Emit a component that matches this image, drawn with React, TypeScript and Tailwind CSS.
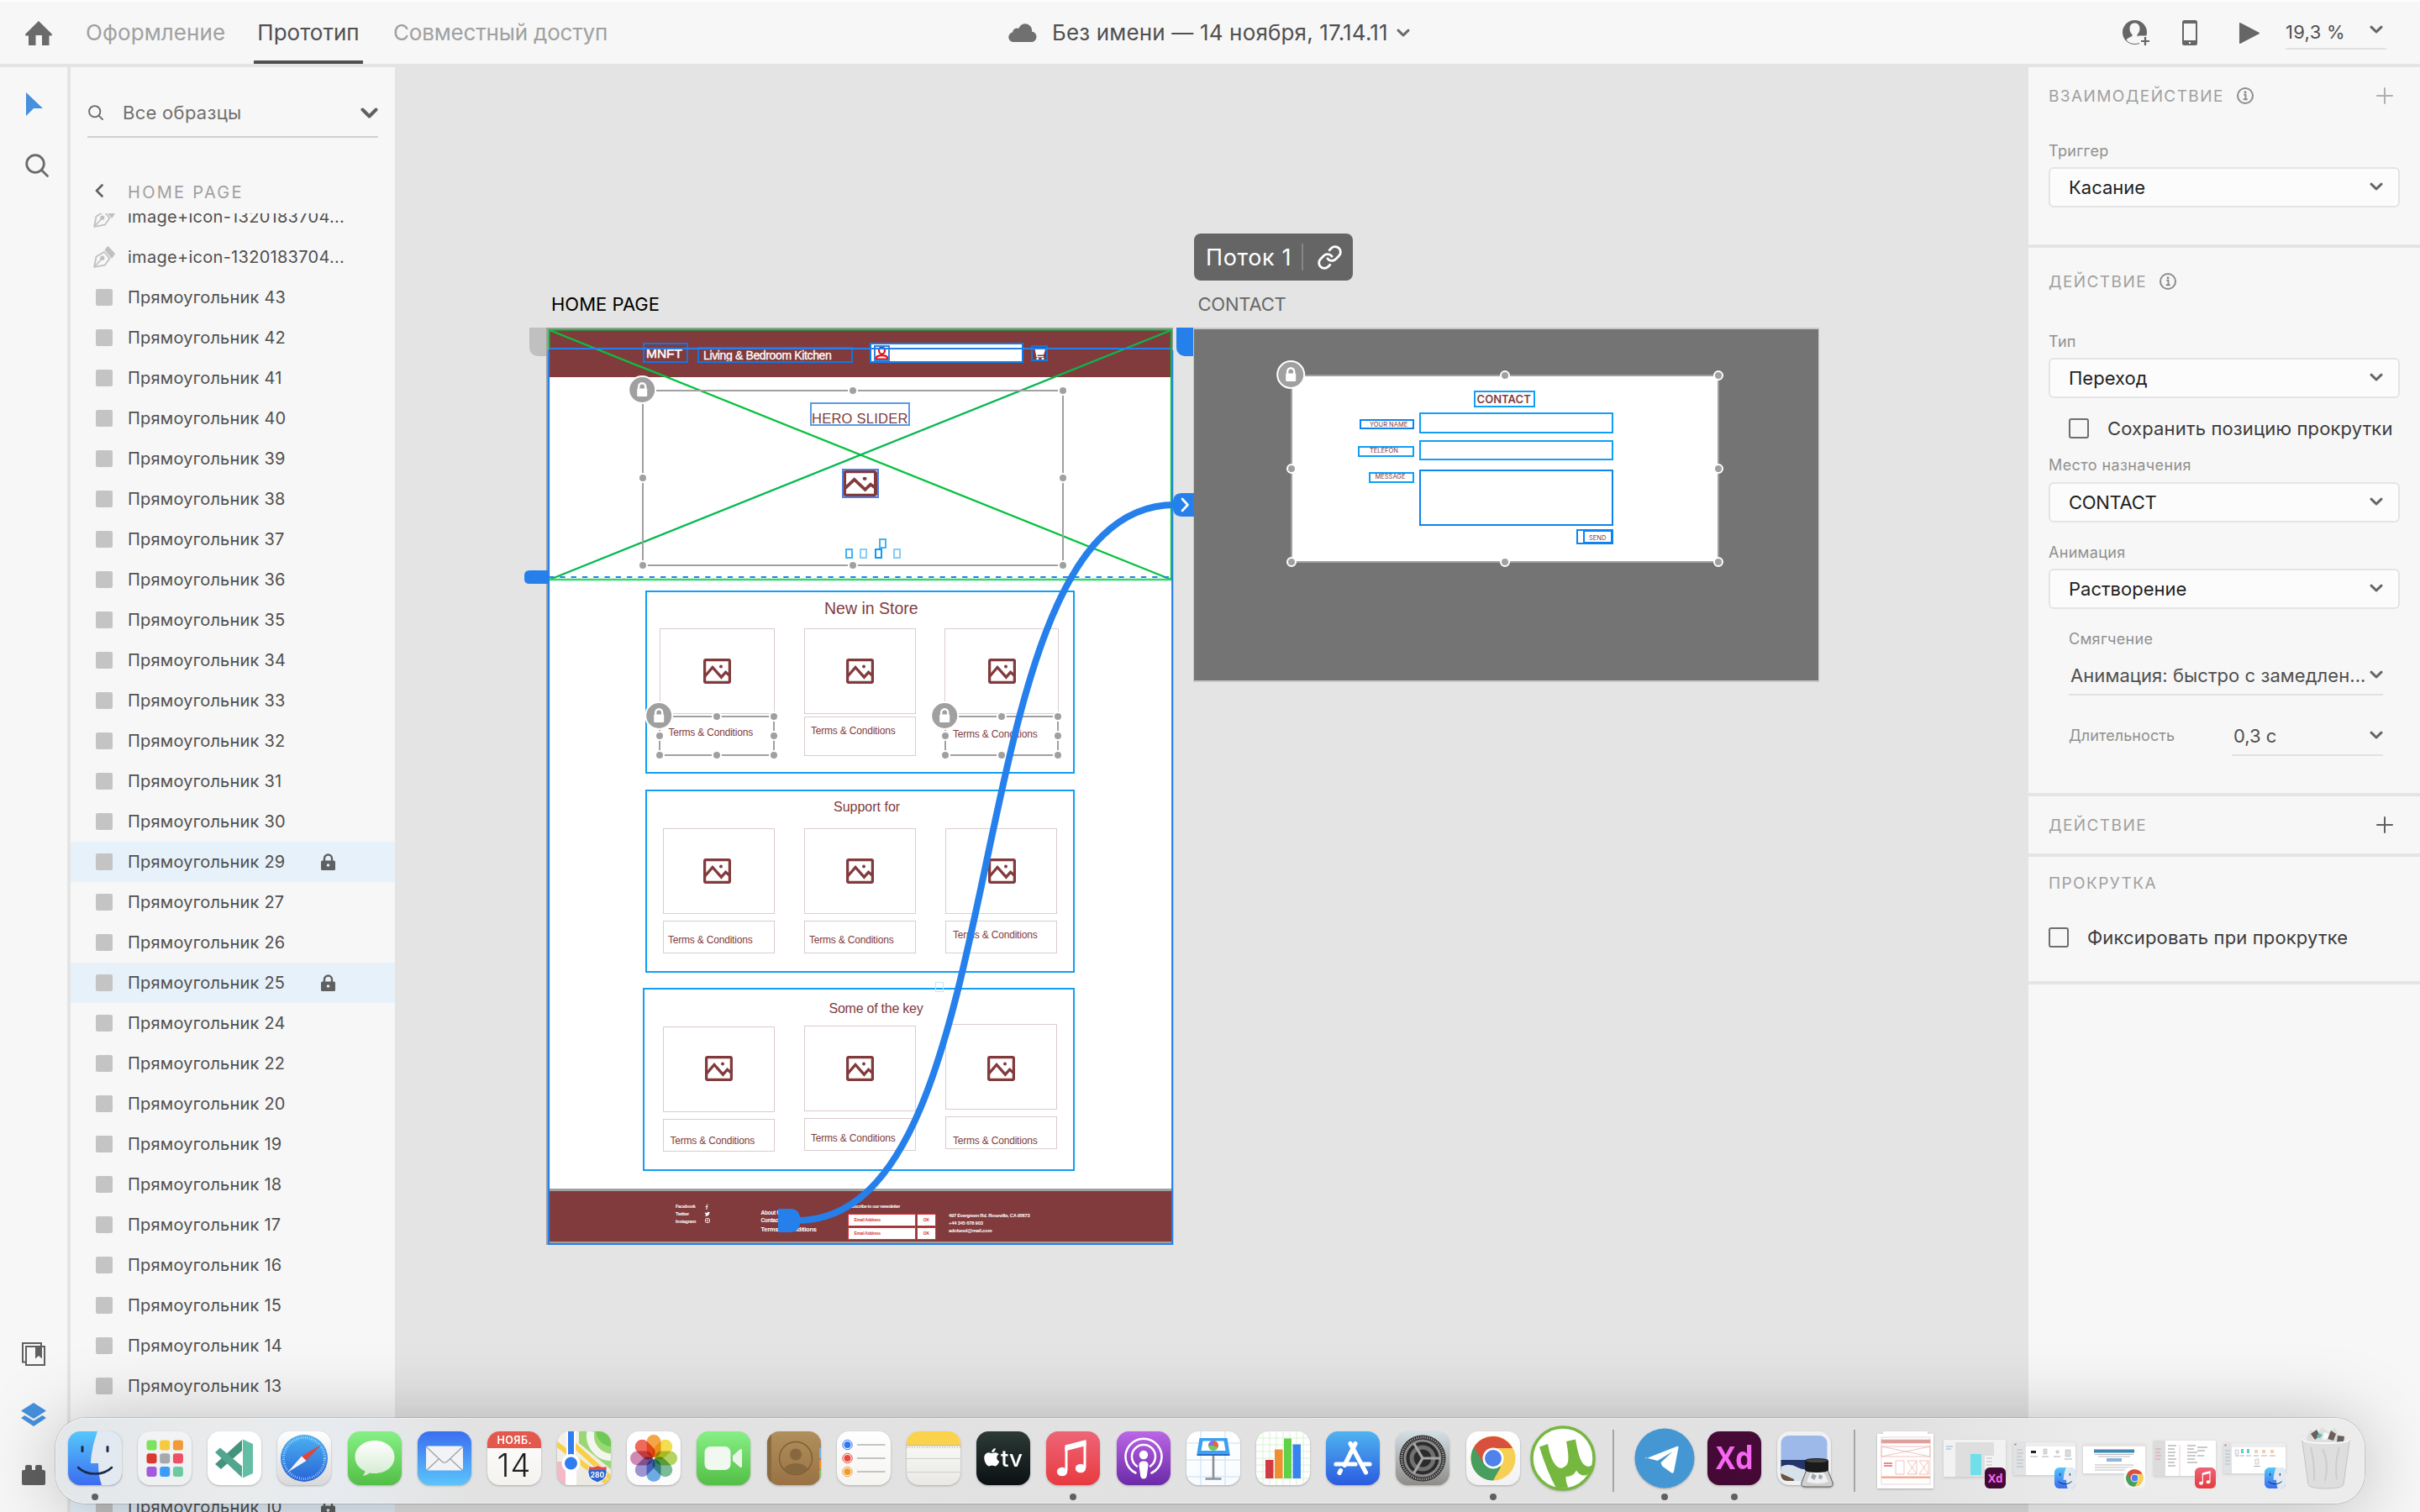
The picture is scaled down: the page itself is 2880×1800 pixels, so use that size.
import React from "react";
import clsx from "clsx";
import { FaApple } from "react-icons/fa";
import { Link } from "lucide-react";

type Box = { children?: React.ReactNode; className?: string };

/* ---------- small shared icons ---------- */

function Chevron({ className }: { className?: string }) {
  return (
    <svg viewBox="0 0 16 10" className={clsx("shrink-0", className)} fill="none" stroke="currentColor" strokeWidth="3" strokeLinecap="round" strokeLinejoin="round">
      <path d="M2 2.200 8 8l6-5.800" />
    </svg>
  );
}

function Info() {
  return (
    <svg viewBox="0 0 20 20" className="size-5 text-[#8c8c8c]" fill="none" stroke="currentColor">
      <circle cx="10" cy="10" r="9" strokeWidth="2" />
      <path d="M8.300 8.700h2.200v5.300M7.700 14.200h5" strokeWidth="1.900" />
      <circle cx="10" cy="5.800" r="1.500" fill="currentColor" stroke="none" />
    </svg>
  );
}

function Plus({ className }: { className: string }) {
  return (
    <svg viewBox="0 0 20 20" className={clsx("size-5", className)} stroke="currentColor" strokeWidth="2" strokeLinecap="round">
      <path d="M10 1v18M1 10h18" />
    </svg>
  );
}

function SearchIcon({ className, w }: { className: string; w: number }) {
  return (
    <svg viewBox="0 0 28 28" className={className} fill="none" stroke="currentColor" strokeWidth={w} strokeLinecap="round">
      <circle cx="12" cy="12" r="10.300" />
      <path d="m19.500 19.500 7 7" />
    </svg>
  );
}

/* ---------- top bar ---------- */

function TopBar() {
  return (
    <header className="flex h-[76px] shrink-0 items-center border-t-2 border-[#fdfdfd] bg-[#f7f7f7] text-[26px] leading-none">
      <div className="flex h-full w-[1200px] items-center pl-[30px]">
        <svg viewBox="0 0 32 29" className="h-[29px] w-8" fill="#6a6a6a">
          <path d="M16 0 31.700 15.500q.8 2-1.200 2H28.500V29H20V17h-7.500v12H4V17.500H1.500q-2 0-1.200-2Z" />
        </svg>
        <div className="ml-10 w-[200px] tracking-[0.09px] text-[#a0a0a0]">Оформление</div>
        <div className="relative flex h-full w-[130px] items-center justify-center text-[#505050]">
          Прототип
          <div className="absolute inset-x-0 bottom-0 h-1 bg-[#505050]" />
        </div>
        <div className="ml-9 tracking-[-0.18px] text-[#a0a0a0]">Совместный доступ</div>
      </div>
      <div className="flex h-full w-[1326px] items-center text-[#505050]">
        <svg viewBox="0 0 34 22" className="h-[22px] w-[34px]" fill="#707070">
          <path d="M6 22a5.800 5.800 0 0 1-1-11.500 5.500 5.500 0 0 1 7.500-4.700A8 8 0 0 1 28 9.500a6.300 6.300 0 0 1 0 12.500Z" />
        </svg>
        <div className="ml-[18px] tracking-[0.16px]">Без имени — 14 ноября, 17.14.11</div>
        <Chevron className="ml-[10px] h-[10px] w-4 text-[#6a6a6a]" />
      </div>
      <div className="flex h-full flex-1 items-center text-[#666666]">
        <svg viewBox="0 0 32 30" className="h-[30px] w-8" fill="none">
          <circle cx="14.500" cy="14.500" r="14.500" fill="#666" />
          <path d="M14.500 3.500c3.800 0 6 2.600 6 6.400 0 3.300-1.200 5.600-3 7v2.200c3 1.300 5.500 2.600 7 4.300-2.400 3-6 4.600-10 4.600s-7.600-1.600-10-4.600c1.500-1.700 4-3 7-4.300v-2.200c-1.800-1.400-3-3.700-3-7 0-3.800 2.200-6.400 6-6.400Z" fill="#f7f7f7" />
          <path d="M18.500 18.500H32V30H20.500Z" fill="#f7f7f7" />
          <path d="M27 20v10M22 25h10" stroke="#666" strokeWidth="2.200" />
        </svg>
        <svg viewBox="0 0 18 30" className="ml-[39px] h-[30px] w-[18px]">
          <rect width="18" height="30" rx="2.500" fill="#666" />
          <rect x="2" y="4" width="14" height="20" fill="#f7f7f7" />
          <rect x="8" y="26" width="2" height="2" fill="#f7f7f7" />
        </svg>
        <svg viewBox="0 0 24 25" className="ml-[50px] h-[25px] w-6" fill="#666">
          <path d="M0 1q0-1.500 1.500-.8l22 11.500q1 .8 0 1.600l-22 11.500Q0 25.500 0 24Z" />
        </svg>
        <div className="ml-[31px] flex h-[39px] w-[120px] items-center justify-between border-b-2 border-[#e2e2e2] pr-1 text-[22px] text-[#505050]">
          <span className="tracking-[0.29px]">19,3 %</span>
          <Chevron className="mb-1.5 h-[10px] w-4 text-[#666]" />
        </div>
      </div>
    </header>
  );
}

/* ---------- left side ---------- */

function ToolRail() {
  return (
    <nav className="flex w-[84px] shrink-0 flex-col border-t-4 border-r-4 border-t-[#e4e4e4] border-r-[#e4e4e4] bg-[#f7f7f7] pt-[30px] pb-8">
      <svg viewBox="0 0 20 28" className="ml-[31px] h-7 w-5" fill="#4690dd">
        <path d="M0 0 20 19H9L0 28Z" />
      </svg>
      <SearchIcon className="mt-[45px] ml-[30px] size-7 text-[#6a6a6a]" w={2.8} />
      <svg viewBox="0 0 28 28" className="mt-auto ml-[26px] size-7" fill="none" stroke="#606060" strokeWidth="2">
        <path d="M5 23.500H1V1h22v4" />
        <rect x="5" y="5" width="22" height="22" />
        <path d="M16 5h8v14.500l-4-3.500-4 3.500Z" fill="#606060" stroke="none" />
      </svg>
      <svg viewBox="0 0 30 28" className="mt-[44px] ml-[25px] h-7 w-[30px]" fill="#4690dd">
        <path d="M15 0 30 9.500 15 19 0 9.500Z" />
        <path d="m4.500 15 10.500 6.500L25.500 15l4.500 3-15 10L0 18Z" />
      </svg>
      <svg viewBox="0 0 28 24" className="mt-[46px] ml-[26px] h-6 w-7" fill="#606060">
        <path d="M2 6h2V2q0-2 2-2h4q2 0 2 2v4h4V2q0-2 2-2h4q2 0 2 2v4h2q2 0 2 2v14q0 2-2 2H2q-2 0-2-2V8q0-2 2-2Z" />
      </svg>
    </nav>
  );
}

const layers = [
  "image+icon-1320183704...",
  "image+icon-1320183704...",
  ...[43, 42, 41, 40, 39, 38, 37, 36, 35, 34, 33, 32, 31, 30, 29, 27, 26, 25, 24, 22, 20, 19, 18, 17, 16, 15, 14, 13, 12, 11, 10].map(
    (n) => `Прямоугольник ${n}`
  ),
];
const locked = ["Прямоугольник 29", "Прямоугольник 25", "Прямоугольник 10"];

function LayerRow({ name }: { name: string }) {
  const isLocked = locked.includes(name);
  const isPath = name.startsWith("image");
  return (
    <div className={clsx("flex h-12 items-center pr-[71px] pl-[27px]", isLocked && "bg-[#e6f1fa]")}>
      <div className="flex w-[26px] justify-center">
        {isPath ? (
          <svg viewBox="0 0 26 26" className="size-[26px]" fill="none" stroke="#c0c0c0" strokeWidth="1.800" strokeLinejoin="round">
            <path d="M1.200 24.800 3.500 12.500 13 7l6.500 7.500-5.800 8.200Z" />
            <path d="m1.500 24.500 8.300-9" />
            <circle cx="10.800" cy="14.200" r="1.700" fill="#c0c0c0" />
            <path d="m14.500 4.500 3-3.500 7.500 8-3 4.500Z" fill="#c0c0c0" />
          </svg>
        ) : (
          <div className="size-5 rounded-xs bg-[#c4c4c4]" />
        )}
      </div>
      <span className={clsx("ml-[15px] text-[20px] leading-none whitespace-nowrap text-[#505050]", isPath ? "tracking-[0.28px]" : "tracking-[0.2px]")}>{name}</span>
      {isLocked && (
        <svg viewBox="0 0 17 20" className="ml-auto h-5 w-[17px]">
          <path d="M4 10V6a4.500 4.500 0 0 1 9 0v4" fill="none" stroke="#606060" strokeWidth="2.400" />
          <rect y="8.500" width="17" height="11.500" rx="1.500" fill="#606060" />
          <circle cx="8.500" cy="14" r="1.800" fill="#e6f1fa" />
        </svg>
      )}
    </div>
  );
}

function LayersPanel() {
  return (
    <aside className="flex w-[386px] shrink-0 flex-col overflow-hidden border-t-4 border-[#e4e4e4] bg-[#f7f7f7]">
      <div className="mx-5 mt-[26px] flex h-[58px] shrink-0 items-center border-b-2 border-[#d2d2d2] text-[22px] leading-none text-[#707070]">
        <SearchIcon className="ml-px size-[18px] text-[#6a6a6a]" w={2.9} />
        <span className="ml-[23px] tracking-[0.28px]">Все образцы</span>
        <svg viewBox="0 0 21 13" className="ml-auto h-[13px] w-[21px]" fill="none" stroke="#606060" strokeWidth="4" strokeLinecap="round" strokeLinejoin="round">
          <path d="m2.500 2.500 8 8 8-8" />
        </svg>
      </div>
      <div className="mt-[54px] flex h-[22px] shrink-0 items-center pl-[29px] text-[20px] leading-none text-[#a0a0a0]">
        <svg viewBox="0 0 10 16" className="-mt-1 h-4 w-[10px]" fill="none" stroke="#606060" strokeWidth="2.600" strokeLinecap="round" strokeLinejoin="round">
          <path d="M8.500 1.500 2 8l6.500 6.500" />
        </svg>
        <span className="ml-[29px] tracking-[2.29px]">HOME PAGE</span>
      </div>
      <div className="mt-[14px] min-h-0 flex-1 overflow-hidden">
        <div className="-mt-5">
          {layers.map((name, i) => (
            <LayerRow key={i} name={name} />
          ))}
        </div>
      </div>
    </aside>
  );
}

/* ---------- right side ---------- */

const Heading = ({ children, className }: Box) => <h2 className={clsx("text-[19px] leading-none tracking-[1.42px] text-[#a0a0a0]", className)}>{children}</h2>;
const Label = ({ children, className }: Box) => <div className={clsx("flex h-6 items-center text-[18px] leading-none tracking-[0.3px] whitespace-nowrap text-[#909090]", className)}>{children}</div>;

function Select({ children, className }: Box) {
  return (
    <div className={clsx("flex h-12 items-center justify-between rounded-md border-2 border-[#e4e4e4] bg-[#fcfcfc] pr-[18px] pl-[22px] text-[22px] leading-none text-[#1f1f1f]", className)}>
      <span>{children}</span>
      <Chevron className="mb-0.5 h-[10px] w-4 text-[#666]" />
    </div>
  );
}

function Check({ children, className }: Box) {
  return (
    <label className={clsx("flex h-6 items-center gap-[22px] text-[22px] leading-none tracking-[0.15px] whitespace-nowrap text-[#3c3c3c]", className)}>
      <span className="size-6 rounded-[3px] border-2 border-[#6e6e6e]" />
      {children}
    </label>
  );
}

function Inspector() {
  return (
    <aside className="w-[466px] shrink-0 border-t-4 border-[#e4e4e4] bg-[#f7f7f7]">
      <section className="h-[215px] border-b-4 border-[#e4e4e4] px-6 pt-[23px]">
        <div className="flex h-[22px] items-center pr-2">
          <Heading className="mr-[15px]">ВЗАИМОДЕЙСТВИЕ</Heading>
          <Info />
          <Plus className="ml-auto text-[#b0b0b0]" />
        </div>
        <Label className="mt-[43px]">Триггер</Label>
        <Select className="mt-[7px]">Касание</Select>
      </section>
      <section className="h-[653px] border-b-4 border-[#e4e4e4] px-6 pt-[29px]">
        <div className="flex h-[22px] items-center">
          <Heading className="mr-[15px]">ДЕЙСТВИЕ</Heading>
          <Info />
        </div>
        <Label className="mt-[49px]">Тип</Label>
        <Select className="mt-[7px]">Переход</Select>
        <Check className="mt-6 ml-6">Сохранить позицию прокрутки</Check>
        <Label className="mt-5 tracking-[0.4px]">Место назначения</Label>
        <Select className="mt-2">
          <span className="tracking-[-0.3px]">CONTACT</span>
        </Select>
        <Label className="mt-6">Анимация</Label>
        <Select className="mt-[7px]">Растворение</Select>
        <Label className="mt-6 ml-6">Смягчение</Label>
        <div className="mt-[9px] mr-5 ml-6 flex h-[46px] items-center justify-between border-b-2 border-[#e2e2e2] text-[22px] leading-none whitespace-nowrap text-[#505050]">
          <span className="ml-[2px] tracking-[0.06px]">Анимация: быстро с замедлен...</span>
          <Chevron className="mb-0.5 h-[10px] w-4 text-[#666]" />
        </div>
        <div className="mt-[26px] mr-5 ml-6 flex h-[46px]">
          <Label className="mt-[10px] w-[194px] tracking-[0.08px]">Длительность</Label>
          <div className="flex flex-1 items-center justify-between border-b-2 border-[#e2e2e2] pl-[2px] text-[22px] leading-none text-[#505050]">
            0,3 с
            <Chevron className="mb-0.5 h-[10px] w-4 text-[#666]" />
          </div>
        </div>
      </section>
      <section className="flex h-[72px] items-center justify-between border-b-4 border-[#e4e4e4] pr-8 pl-6">
        <Heading>ДЕЙСТВИЕ</Heading>
        <Plus className="text-[#606060]" />
      </section>
      <section className="h-[152px] border-b-4 border-[#e4e4e4] px-6 pt-[22px]">
        <Heading>ПРОКРУТКА</Heading>
        <Check className="mt-[43px]">Фиксировать при прокрутке</Check>
      </section>
    </aside>
  );
}

/* ---------- canvas ---------- */

const T = ({ children, className }: Box) => <span className={clsx("absolute leading-none whitespace-nowrap", className)}>{children}</span>;
const B = ({ className }: Box) => <div className={clsx("absolute", className)} />;

function Picture({ className }: { className: string }) {
  return (
    <svg viewBox="0 0 33 30" preserveAspectRatio="none" className={clsx("absolute", className)} fill="none" stroke="#823b3d" strokeWidth="3.300">
      <rect x="1.600" y="1.600" width="29.800" height="26.800" rx="1.500" />
      <path d="m1.500 21.500 9.500-11 10.400 11.700 5.200-6 5 4.200" />
      <circle cx="21" cy="9.500" r="2" fill="#823b3d" stroke="none" />
    </svg>
  );
}

function Selection({ x1, y1, x2, y2 }: { x1: number; y1: number; x2: number; y2: number }) {
  const mx = (x1 + x2) / 2;
  const my = (y1 + y2) / 2;
  const dots = [
    [mx, y1], [x2, y1], [x1, my], [x2, my], [x1, y2], [mx, y2], [x2, y2],
  ];
  return (
    <g>
      <rect x={x1} y={y1} width={x2 - x1} height={y2 - y1} fill="none" stroke="#a0a0a0" strokeWidth="2" />
      {dots.map(([x, y], i) => (
        <circle key={i} cx={x} cy={y} r="5" fill="#a0a0a0" stroke="#fff" strokeWidth="2" />
      ))}
      <g transform={`translate(${x1 - 0.8} ${y1 - 1})`}>
        <circle r="16" fill="#a0a0a0" stroke="#fff" strokeWidth="2" />
        <path d="M-4 0v-3.800a4 4 0 0 1 8 0V0" fill="none" stroke="#fff" strokeWidth="2.400" />
        <rect x="-6" y="-1.500" width="12" height="9.500" rx="1" fill="#fff" />
      </g>
    </g>
  );
}

const cards = [
  "left-[785px] top-[748px] w-[137px] h-[102px]", "left-[957px] top-[748px] w-[133px] h-[102px]", "left-[1124px] top-[748px] w-[136px] h-[102px]",
  "left-[957px] top-[853px] w-[133px] h-[47px]",
  "left-[789px] top-[986px] w-[133px] h-[102px]", "left-[957px] top-[986px] w-[133px] h-[102px]", "left-[1125px] top-[986px] w-[133px] h-[102px]",
  "left-[789px] top-[1096px] w-[133px] h-[39px]", "left-[957px] top-[1096px] w-[133px] h-[39px]", "left-[1125px] top-[1096px] w-[133px] h-[39px]",
  "left-[789px] top-[1222px] w-[133px] h-[102px]", "left-[957px] top-[1221px] w-[133px] h-[102px]", "left-[1125px] top-[1219px] w-[133px] h-[102px]",
  "left-[789px] top-[1332px] w-[133px] h-[39px]", "left-[957px] top-[1331px] w-[133px] h-[39px]", "left-[1125px] top-[1329px] w-[133px] h-[39px]",
];
const pictures = [
  "left-[837px] top-[784px]", "left-[1007px] top-[784px]", "left-[1176px] top-[784px]",
  "left-[837px] top-[1022px]", "left-[1007px] top-[1022px]", "left-[1176px] top-[1022px]",
  "left-[839px] top-[1257px]", "left-[1007px] top-[1257px]", "left-[1175px] top-[1257px]",
];
const terms = [
  "left-[795.500px] top-[866.300px]", "left-[965px] top-[864.300px]", "left-[1134px] top-[868.300px]",
  "left-[795px] top-[1113.200px]", "left-[963px] top-[1113.200px]", "left-[1134px] top-[1107.200px]",
  "left-[797.500px] top-[1352px]", "left-[965px] top-[1349px]", "left-[1134px] top-[1352px]",
];
const groups = [
  "left-[768px] top-[702.500px] w-[511px] h-[218px]",
  "left-[768px] top-[939.500px] w-[511px] h-[218px]",
  "left-[765px] top-[1175.500px] w-[514px] h-[218px]",
];
const bullets = [
  "left-[1006px] top-[653px] border-[#42b4f5]", "left-[1023px] top-[653px] border-[#86cdf7]", "left-[1040.500px] top-[653px] border-[#0a9df5]",
  "left-[1046px] top-[641px] border-[#42b4f5]", "left-[1063px] top-[653px] border-[#86cdf7]",
];

function HomeArtboard() {
  return (
    <>
      <T className="top-[351px] left-[656px] text-[22px] text-black">HOME PAGE</T>
      <B className="top-[390px] left-[630px] h-[34px] w-5 rounded-bl-[10px] bg-[#c0c0c0]" />
      <B className="top-[390px] left-[650px] h-[1092px] w-[746px] bg-[#a0a0a0]" />
      <B className="top-[393px] left-[653px] h-[1022px] w-[742px] bg-white" />
      <B className="top-[393px] left-[653px] h-14 w-[742px] bg-[#823b3d]" />
      <B className="top-[1418px] left-[653px] h-[60px] w-[742px] bg-[#823b3d]" />

      <T className="top-[413.400px] left-[769px] font-[Liberation_Sans] text-[15.500px] text-white [-webkit-text-stroke:0.5px_white]">MNFT</T>
      <T className="top-[415.700px] left-[837px] font-[Liberation_Sans] text-[14px] tracking-[-0.36px] text-white [-webkit-text-stroke:0.300px_white]">Living &amp; Bedroom Kitchen</T>
      <B className="top-[408px] left-[764.500px] h-6 w-[54px] border-2 border-[#0e77e0]" />
      <B className="top-[413px] left-[829.500px] h-[19px] w-[185px] border-2 border-[#0e77e0]" />
      <B className="top-[408px] left-[1034.500px] h-[24px] w-[183px] border-2 border-[#0e7fe8] bg-white" />
      <svg viewBox="0 0 17 17" className="absolute top-[412px] left-[1041px] size-[17px]" fill="none" stroke="#e0121b" strokeWidth="2.200">
        <path d="M8.500 1.500c2.200 0 3.500 1.500 3.500 3.500 0 2.500-1.500 4.500-3.500 4.500S5 7.500 5 5s1.300-3.500 3.500-3.500ZM1.500 15.500c0-3 2.500-4.300 7-4.300s7 1.300 7 4.300Z" />
      </svg>
      <B className="top-[411px] left-[1040px] h-[19px] w-[19px] border-2 border-[#3b7fd8]" />
      <svg viewBox="0 0 16 15" className="absolute top-[414px] left-[1229px] h-[15px] w-4" fill="#fff">
        <path d="M0 0h3l.6 2H15l-2 6.500H5.500L5.800 10H13v1.200H4.500L2.500 1.300H0Z" />
        <circle cx="5.800" cy="13.200" r="1.400" />
        <circle cx="12" cy="13.200" r="1.400" />
      </svg>
      <B className="top-[411px] left-[1226.500px] h-[19px] w-5 border-2 border-[#0e77e0]" />

      <T className="top-[490px] left-[966px] font-[Liberation_Sans] text-[16.500px] tracking-[0.25px] text-[#823b3d]">HERO SLIDER</T>
      <B className="top-[479px] left-[964px] h-7 w-[119px] border-2 border-[#5a9ae4]" />
      <Picture className="top-[560px] left-[1003px] h-[31px] w-[41px]" />
      <B className="top-[558px] left-[1001.500px] h-[35px] w-11 border-2 border-[#4a80e8]" />
      {bullets.map((c) => (
        <B key={c} className={clsx("h-3 w-[9px] border-2", c)} />
      ))}

      {cards.map((c) => (
        <B key={c} className={clsx("border border-[#dccbcc]", c)} />
      ))}
      {pictures.map((c) => (
        <Picture key={c} className={clsx("h-[30px] w-[33px]", c)} />
      ))}
      {terms.map((c) => (
        <T key={c} className={clsx("font-[Liberation_Sans] text-[12px] tracking-[-0.2px] text-[#823b3d]", c)}>Terms &amp; Conditions</T>
      ))}
      <T className="top-[714.500px] left-[981px] font-[Liberation_Sans] text-[19.500px] text-[#823b3d]">New in Store</T>
      <T className="top-[953px] left-[992px] font-[Liberation_Sans] text-[16px] text-[#823b3d]">Support for</T>
      <T className="top-[1192.500px] left-[986.500px] font-[Liberation_Sans] text-[16px] tracking-[-0.24px] text-[#823b3d]">Some of the key</T>
      {groups.map((c) => (
        <B key={c} className={clsx("border-2 border-[#0f9ff5]", c)} />
      ))}
      <B className="top-[1169px] left-[1113px] h-3 w-[10px] border border-[#c3e6fa]" />

      <div className="font-[Liberation_Sans] text-[5.500px] font-bold tracking-[-0.25px] text-white">
        <T className="top-[1433.600px] left-[804px]">Facebook</T>
        <T className="top-[1442.600px] left-[804px]">Twitter</T>
        <T className="top-[1451.600px] left-[804px]">Instagram</T>
        <T className="top-[1440.500px] left-[905.500px] text-[6.500px]">About Us</T>
        <T className="top-[1449.500px] left-[905.500px] text-[6.500px]">Contact</T>
        <T className="top-[1459.700px] left-[905.500px] text-[7.500px]">Terms &amp; Conditions</T>
        <T className="top-[1434.300px] left-[1008px] tracking-[-0.35px]">Subscribe to our newsletter</T>
        <T className="top-[1445.300px] left-[1129px] text-[5.800px] tracking-[-0.28px]">497 Evergreen Rd. Roseville, CA 95673</T>
        <T className="top-[1454px] left-[1129px] text-[5.800px] tracking-[-0.2px]">+44 345 678 903</T>
        <T className="top-[1463.300px] left-[1129px] text-[5.800px] tracking-[-0.2px]">adobexd@mail.com</T>
      </div>
      <svg viewBox="0 0 8 24" className="absolute top-[1433px] left-[838px] h-6 w-2" fill="none" stroke="#fff">
        <path d="M4.500 1Q3 .8 3 2.500V7M1.800 3.500h2.600" strokeWidth="1" />
        <path d="M1 14.500c3 .8 5-.8 5.200-3.500l.8-.8-2-.4c-1.300 0-1.500 1-1.500 1.500L1 10.200c-.2 1.500.5 2.300 1.300 2.800Z" fill="#fff" stroke="none" />
        <rect x="1.500" y="17.500" width="5" height="5" rx="1.200" strokeWidth=".8" />
        <circle cx="4" cy="20" r="1.100" strokeWidth=".7" />
      </svg>
      {["top-[1445px]", "top-[1461px]"].map((c) => (
        <div key={c} className={clsx("absolute left-[1008.500px] flex h-[15px] gap-[1.500px] font-[Liberation_Sans] text-[5px] leading-none font-bold tracking-[-0.25px] text-[#d8343c]", c)}>
          <div className="flex w-[81px] items-center rounded-[1px] border-[0.500px] border-[#d8343c] bg-white pl-[7px]">Email Address</div>
          <div className="flex w-[22.500px] items-center justify-center rounded-[1px] border-[0.500px] border-[#d8343c] bg-white">OK</div>
        </div>
      ))}
      <B className="top-[390px] left-[1400px] h-[34px] w-5 rounded-bl-[10px] bg-[#2680eb]" />
    </>
  );
}

const fields = [
  "left-[1754px] top-[465px] w-[73px] h-[20px] border-[#0f9ff5]",
  "left-[1618px] top-[499px] w-[65px] h-[12px] border-[#0d84ee]",
  "left-[1616px] top-[531px] w-[67px] h-[13px] border-[#0f9ff5]",
  "left-[1629px] top-[562px] w-[54px] h-[13px] border-[#0f9ff5]",
  "left-[1689px] top-[491px] w-[231px] h-[25px] border-[#0f9ff5]",
  "left-[1689px] top-[524px] w-[231px] h-[24px] border-[#0f9ff5]",
  "left-[1689px] top-[559px] w-[231px] h-[67px] border-[#0d84ee]",
  "left-[1876px] top-[630px] w-[44px] h-[18px] border-[#0d84ee]",
  "left-[1884px] top-[631px] w-[35px] h-[16px] border-[#0d84ee]",
];

function ContactArtboard() {
  return (
    <>
      <div className="absolute top-[278px] left-[1421px] flex h-14 w-[189px] items-center rounded-lg bg-[#656565] pl-[14px] text-[27px] leading-none text-white">
        <span className="w-[114px] tracking-[0.6px] whitespace-nowrap">Поток 1</span>
        <span className="h-8 w-[1.500px] bg-[#868686]" />
        <Link className="ml-[16px] size-[31px]" strokeWidth={2.2} />
      </div>
      <T className="top-[351px] left-[1425.500px] text-[22px] tracking-[-0.2px] text-[#686868]">CONTACT</T>
      <B className="top-[390px] left-[1420px] h-[422px] w-[745px] bg-[#c8c8c8]" />
      <B className="top-[392px] left-[1421px] h-[418px] w-[743px] bg-[#747474]" />
      <B className="top-[447px] left-[1537px] h-[222px] w-[508px] bg-white" />
      {fields.map((c) => (
        <B key={c} className={clsx("border-2", c)} />
      ))}
      <div className="text-[7.500px] text-[#823b3d]">
        <T className="top-[468.800px] left-[1757.500px] text-[13px] font-semibold tracking-[0.05px]">CONTACT</T>
        <T className="top-[501.500px] left-[1630px]">YOUR NAME</T>
        <T className="top-[533.100px] left-[1630px]">TELEFON</T>
        <T className="top-[564.200px] left-[1636.500px]">MESSAGE</T>
        <T className="top-[636.500px] left-[1891px]">SEND</T>
      </div>
    </>
  );
}

function Canvas() {
  return (
    <main className="relative flex-1 overflow-hidden bg-[#e4e4e4]">
      <div className="absolute -top-[76px] -left-[470px] h-[1800px] w-[2414px]">
        <HomeArtboard />
        <ContactArtboard />
        <svg viewBox="0 0 2414 1500" className="absolute top-0 left-0 h-[1500px] w-[2414px]" fill="none">
          <path d="M654 393 1394 690" stroke="#07c23f" strokeWidth="2.300" />
          <path d="M1394 393 654 690" stroke="#07b84f" strokeWidth="2.300" />
          <path d="M653 690H1395" stroke="#35d670" strokeWidth="2.500" />
          <path d="M653 687H1394" stroke="#2680eb" strokeWidth="2" strokeDasharray="6.300 7" />
          <path d="M653 415H1395" stroke="#2680eb" strokeWidth="2" />
          <path d="M653 417V1481H1395.200V417" stroke="#2680eb" strokeWidth="2.200" />
          <path d="M653.500 415V392.700H1393.800V690" stroke="#07c23f" strokeWidth="1.800" />
          <path d="M653 679H630q-6 0-6 6v4q0 6 6 6h23Z" fill="#2680eb" />
          <Selection x1={765} y1={465} x2={1265} y2={673} />
          <Selection x1={785} y1={853} x2={921} y2={899} />
          <Selection x1={1125} y1={853} x2={1259} y2={899} />
          <Selection x1={1537} y1={447} x2={2045} y2={669} />
          <path d="M948 1453C1220 1453 1128 601 1398 601" stroke="#2680eb" strokeWidth="8" />
          <path d="M926 1439h14q12 0 12 12v4q0 12-12 12h-14Z" fill="#2680eb" />
          <path d="M1421 587h-14q-11 0-11 11v6q0 11 11 11h14Z" fill="#2680eb" />
          <path d="m1407 594 6.500 7-6.500 7" stroke="#fff" strokeWidth="2.600" strokeLinecap="round" strokeLinejoin="round" />
        </svg>
      </div>
    </main>
  );
}

/* ---------- dock ---------- */

function Tile({ id, top, bottom, children }: { id: string; top: string; bottom: string; children?: React.ReactNode }) {
  return (
    <svg viewBox="0 0 64 64" className="size-full overflow-visible">
      <defs>
        <linearGradient id={id} x2="0" y2="1">
          <stop stopColor={top} />
          <stop offset="1" stopColor={bottom} />
        </linearGradient>
        <clipPath id={`${id}-clip`}>
          <rect width="64" height="64" rx="14.500" />
        </clipPath>
      </defs>
      <rect width="64" height="64" rx="14.500" fill={`url(#${id})`} />
      <g clipPath={`url(#${id}-clip)`}>{children}</g>
    </svg>
  );
}

const Finder = ({ id = "finder" }: { id?: string }) => (
  <Tile id={id} top="#55c8fb" bottom="#3b6cf0">
    <path d="M35 0C30 14 27.500 26 27 38h9c0 9 1 18 4 26h24V0Z" fill="#e3e9f1" />
    <path d="M17 18.500v5M47 18.500v5" stroke="#1b2b45" strokeWidth="3" strokeLinecap="round" />
    <path d="M12 43c10 10 30 10 40 0" fill="none" stroke="#1b2b45" strokeWidth="2.500" strokeLinecap="round" />
  </Tile>
);

const Launchpad = () => (
  <Tile id="launch" top="#f3f3f4" bottom="#eef0f2">
    {["#7de35c", "#f8c93c", "#f19a37", "#d93a2f", "#a3a9ad", "#ee4f66", "#a259de", "#3a9bf8", "#6cc9a0"].map((c, i) => (
      <rect key={c} x={10.5 + (i % 3) * 15.7} y={10.5 + Math.floor(i / 3) * 15.7} width="12" height="12" rx="3" fill={c} />
    ))}
  </Tile>
);

const Code = () => (
  <Tile id="code" top="#ffffff" bottom="#ffffff">
    <path d="M41 10v13L16 45l-7-6Z" fill="#43947d" />
    <path d="m9 25 6-5.500 26 22V55Z" fill="#52a58f" />
    <path d="M42 9.500 54 15v35l-12 5.500Z" fill="#62bfa6" />
  </Tile>
);

const Safari = () => (
  <Tile id="safari" top="#ffffff" bottom="#d9d9db">
    <defs>
      <linearGradient id="safari-dial" x2="0" y2="1">
        <stop stopColor="#4bb2f2" />
        <stop offset="1" stopColor="#2763d6" />
      </linearGradient>
    </defs>
    <circle cx="32" cy="32" r="28" fill="url(#safari-dial)" />
    <circle cx="32" cy="32" r="24.500" fill="none" stroke="#cfe6fb" strokeWidth="3" strokeDasharray=".7 1.870" />
    <path d="M52 16 34.500 35l-5.500-5.500Z" fill="#e0453c" />
    <path d="M12 49 29 29.500l5.500 5.500Z" fill="#f4f4f4" />
  </Tile>
);

const Messages = () => (
  <Tile id="messages" top="#86f085" bottom="#53bf46">
    <defs>
      <linearGradient id="bubble" x2="0" y2="1">
        <stop stopColor="#fff" />
        <stop offset="1" stopColor="#d3ebcf" />
      </linearGradient>
    </defs>
    <path d="M32 11c13.500 0 23.500 8.500 23.500 19.500S45.500 50 32 50c-2 0-4-.2-6-.6-2 1.800-5 3-8.500 3.300 1.800-1.700 2.800-3.500 3-5.200C13 44 8.500 38 8.500 30.500 8.500 19.500 18.500 11 32 11Z" fill="url(#bubble)" />
  </Tile>
);

const Mail = () => (
  <Tile id="mail" top="#3a6ff0" bottom="#5cc4fb">
    <rect x="10" y="17.500" width="44" height="29" rx="3" fill="#f2f3f4" />
    <path d="m11 19 18 17q3 2.500 6 0l18-17M11 46l14-13M53 46 39 33" fill="none" stroke="#9aa0a6" strokeWidth="1.200" />
  </Tile>
);

const Calendar = () => (
  <Tile id="cal" top="#ffffff" bottom="#f4f2ee">
    <path d="M0 0h64v20H0Z" fill="#e4574c" />
    <text x="32" y="15" textAnchor="middle" fontFamily="Inter, sans-serif" fontSize="12.500" fontWeight="600" fill="#fff" textLength="41">НОЯБ.</text>
    <text x="31.500" y="54" textAnchor="middle" fontFamily="Inter, sans-serif" fontSize="38" fontWeight="300" fill="#1d1d1d" textLength="40">14</text>
  </Tile>
);

const Maps = () => (
  <Tile id="maps" top="#f3f1e8" bottom="#ece9e0">
    <path d="M26 0h38v45L26 14Z" fill="#9ad873" />
    <path d="M40 0a26 26 0 0 0 24 31" fill="none" stroke="#f4f4f0" strokeWidth="9" />
    <path d="M64 0H46a20 20 0 0 0 18 18Z" fill="#6fca55" />
    <path d="M0 36h11v28H0Z" fill="#f3b9c4" />
    <path d="M-2 14 66 66M20 16 64 56" stroke="#f9cf45" strokeWidth="6" />
    <path d="M16.500 36v28" stroke="#fff" strokeWidth="13" />
    <path d="M16.500 0v38" stroke="#fff" strokeWidth="11" />
    <path d="M16.500 0v36" stroke="#2f7df0" strokeWidth="7" />
    <circle cx="16.500" cy="38" r="11" fill="#fff" />
    <circle cx="16.500" cy="38" r="7.500" fill="#2f7df0" />
    <path d="M38 42q5 2 10-1 5 3 10 1 5 14-10 19-15-5-10-19Z" fill="#2b66d0" stroke="#fff" />
    <path d="M37.500 46h21v-4q-5 2-10-1-5 3-10 1Z" fill="#df4b42" />
    <text x="48" y="55" textAnchor="middle" fontFamily="Inter, sans-serif" fontSize="8.500" fontWeight="700" fill="#fff">280</text>
  </Tile>
);

const Photos = () => (
  <Tile id="photos" top="#ffffff" bottom="#fbfbfb">
    {["#f29a2e", "#f0d936", "#a9cc4b", "#69b38a", "#5a9fe0", "#8f84c9", "#c77aa8", "#ec5545"].map((c, i) => (
      <rect key={c} x="23.500" y="4" width="17" height="27" rx="8.500" fill={c} fillOpacity=".88" transform={`rotate(${i * 45} 32 32)`} className="mix-blend-multiply" />
    ))}
  </Tile>
);

const FaceTime = () => (
  <Tile id="facetime" top="#86f085" bottom="#53bf46">
    <rect x="9.500" y="18" width="31" height="28" rx="7" fill="#f1f8f0" />
    <path d="m43 29 8.500-7.500q2.500-1.500 2.500 1v19q0 2.500-2.500 1L43 35Z" fill="#eaf5e8" />
  </Tile>
);

const Contacts = () => (
  <Tile id="contacts" top="#b08f5c" bottom="#9a7244">
    <path d="M0 0h5v64H0Z" fill="#8a6a3f" />
    <circle cx="34" cy="32" r="19.500" fill="none" stroke="#7d5d35" strokeWidth="1.400" />
    <circle cx="34" cy="27.500" r="7" fill="#87673d" />
    <path d="M20 44q5-6 14-6t14 6q-5 7.500-14 7.500T20 44Z" fill="#87673d" />
    <path d="M62 20h2v12h-2Z" fill="#6bb4ee" />
    <path d="M62 34h2v11h-2Z" fill="#f08d2d" />
    <path d="M62 46h2v10h-2Z" fill="#6fd25c" />
  </Tile>
);

const Reminders = () => (
  <Tile id="reminders" top="#ffffff" bottom="#f5f4f1">
    {["#3076f5", "#e9483d", "#f09a2d"].map((c, i) => (
      <g key={c} transform={`translate(0 ${16 + i * 16})`}>
        <circle cx="12.500" r="4" fill={c} />
        <circle cx="12.500" r="5.700" fill="none" stroke={c} strokeWidth="1" />
        <path d="M24 0h33.500" stroke="#c4c4c4" strokeWidth="1.800" />
      </g>
    ))}
  </Tile>
);

const Notes = () => (
  <Tile id="notes" top="#fdfdfc" bottom="#e9e8e4">
    <path d="M0 0h64v16.500H0Z" fill="#fad24c" />
    <path d="M0 17h64" stroke="#b0a990" strokeWidth="1.200" />
    <path d="M0 19.500h64" stroke="#a8a8a8" strokeWidth="1.200" strokeDasharray="1 2" />
    <path d="M0 32.500h64M0 48.500h64" stroke="#cfcfcf" strokeWidth="1.200" />
  </Tile>
);

const AppleTv = () => (
  <Tile id="tv" top="#2c3a36" bottom="#0b1012">
    <FaApple x={6} y={18.5} size={24.5} color="#fff" />
    <text x="29" y="42" fontFamily="Inter, sans-serif" fontSize="27" fontWeight="500" fill="#fff" textLength="26" lengthAdjust="spacingAndGlyphs">tv</text>
  </Tile>
);

const Music = ({ id = "music" }: { id?: string }) => (
  <Tile id={id} top="#ee6577" bottom="#e83a3f">
    <path d="m22.500 16.500 25-6.500v7l-25 6.500Z" fill="#fff" />
    <path d="M24 18v29M46 12v31" stroke="#fff" strokeWidth="3" />
    <ellipse cx="19" cy="48" rx="6.200" ry="5.200" fill="#fff" />
    <ellipse cx="41" cy="44" rx="6.200" ry="5.200" fill="#fff" />
  </Tile>
);

const Podcasts = () => (
  <Tile id="podcasts" top="#bb66e6" bottom="#6b2aa8">
    <g fill="none" stroke="#fff" strokeWidth="2.600" strokeLinecap="round">
      <path d="M22.500 49.500a21.500 21.500 0 1 1 19 0" />
      <path d="M24 41.500a14 14 0 1 1 16 0" />
    </g>
    <circle cx="32" cy="28" r="5.200" fill="#fff" />
    <path d="M26.500 40q0-4.500 5.500-4.500t5.500 4.500l-1.700 13q-.8 3.500-3.800 3.500T28.200 53Z" fill="#fff" />
  </Tile>
);

const Keynote = () => (
  <Tile id="keynote" top="#ffffff" bottom="#f8fbff">
    <path d="M0 14h64M0 34h64M0 54h64M17 0v64M46 0v64" stroke="#d6e7f8" strokeWidth="1.500" />
    <path d="M15.500 8h33l3 18.500H12.500Z" fill="#3ba0f0" />
    <path d="M19.500 11.500h25L46.500 23h-29Z" fill="#fff" />
    <circle cx="32" cy="17" r="6" fill="#70c860" />
    <path d="M32 17v-6a6 6 0 0 1 5.500 8Z" fill="#ef5c48" />
    <path d="M32 17v-6a6 6 0 0 0-6 6Z" fill="#8a6be0" />
    <path d="M12.500 26.500h39V29h-39Z" fill="#2467c8" />
    <path d="M32 29v27" stroke="#8a9096" strokeWidth="2.600" />
    <path d="M22.500 56.500h19" stroke="#8a9096" strokeWidth="2.500" />
  </Tile>
);

const Numbers = () => (
  <Tile id="numbers" top="#ffffff" bottom="#fdfdfd">
    <path d="M8 0v64M16 0v64M24 0v64M32 0v64M40 0v64M48 0v64M56 0v64M0 8h64M0 16h64M0 24h64M0 32h64M0 40h64M0 48h64M0 56h64" stroke="#d5f2d0" strokeWidth=".9" />
    <path d="M11 34h9.500v22H11Z" fill="#d23b42" />
    <path d="M22 21.500h9.500V56H22Z" fill="#f08f2f" />
    <path d="M33 8.500h9V56h-9Z" fill="#5fd24a" />
    <path d="M43.500 15.500h9.500V56h-9.500Z" fill="#3784ee" />
  </Tile>
);

const AppStore = () => (
  <Tile id="appstore" top="#4fb3f0" bottom="#2b5be0">
    <g stroke="#fff" strokeWidth="5.200" strokeLinecap="round">
      <path d="M35 14.500 22 40.500M17.500 46.500l-1.500 3M29 14.500l18.500 34.500M12 39h23M44 39h8" />
    </g>
  </Tile>
);

const Settings = () => (
  <Tile id="settings" top="#d3dfe5" bottom="#8f8c88">
    <circle cx="32" cy="32" r="27.500" fill="#2b2b2b" />
    <circle cx="32" cy="32" r="25" fill="none" stroke="#9b9b9b" strokeWidth="3" strokeDasharray="1.300 1.300" />
    <circle cx="32" cy="32" r="21" fill="none" stroke="#8b8b8b" strokeWidth="3" />
    <circle cx="32" cy="32" r="13" fill="none" stroke="#707070" strokeWidth="5" />
    <path d="M32 32h21M32 32 21.500 14M32 32 21.500 50" stroke="#a5a5a5" strokeWidth="3.200" />
  </Tile>
);

const Chrome = ({ id = "chrome" }: { id?: string }) => (
  <Tile id={id} top="#ffffff" bottom="#f2f2f2">
    <circle cx="32" cy="32" r="26.500" fill="#f7cf52" />
    <path d="M32 32 9.050 18.750A26.500 26.500 0 0 0 32 58.500l9-16Z" fill="#479e5f" />
    <path d="M9.050 18.750A26.500 26.500 0 0 1 55 20H32L21 38.500Z" fill="#d9503f" />
    <circle cx="32" cy="32" r="12.500" fill="#fff" />
    <circle cx="32" cy="32" r="10" fill="#5082ec" />
  </Tile>
);

const Torrent = () => (
  <svg viewBox="0 0 78 78" className="size-full">
    <circle cx="39" cy="39" r="37" fill="#fff" stroke="#76b83f" strokeWidth="3.500" />
    <path d="M11 25.500 21 22q3.500 19 9.500 25.500t13-.5q4-5-.5-28l11-2.500q4 24 9.500 29.500t11 .5q-3 14-11.500 13-5-1-8-6-3.500 7.500-12.500 7.500 0 8 3 12.500l-14 2Q20 55 11 25.500Z" fill="#76b83f" />
  </svg>
);

const Telegram = () => (
  <svg viewBox="0 0 72 72" className="size-full">
    <circle cx="36" cy="36" r="35.500" fill="#4597d3" />
    <path d="M13.500 36.500 51 21.800q1.800-.4 1.500 1.500L47 52q-.8 2.500-3 1.200l-11-8-1.500-4 14-13.200-18 11-12-3.300q-2.500-.5-2-1.200Z" fill="#fff" />
  </svg>
);

const Xd = ({ id = "xd" }: { id?: string }) => (
  <Tile id={id} top="#460a36" bottom="#430834">
    <text x="10" y="45" fontFamily="Open Sans, sans-serif" fontSize="37" fontWeight="700" fill="#f567f0" textLength="45" lengthAdjust="spacingAndGlyphs">Xd</text>
  </Tile>
);

const Preview = () => (
  <svg viewBox="0 0 70 66" className="h-[66px] w-[70px] overflow-visible">
    <rect width="64" height="64" rx="14.500" fill="#f0f0f0" />
    <rect x="4.500" y="5" width="55" height="54" rx="9" fill="#9db9ea" />
    <path d="M4.500 34h55v12h-55Z" fill="#23356b" />
    <path d="M4.500 42q10-5 20 1t35-3v12q0 7-8 7h-40q-7 0-7-7Z" fill="#d7e1ea" />
    <path d="M4.500 50 20 57v2h-8q-6.500-.5-7.500-6Z" fill="#6a5340" />
    <path d="M36 43 29 61q-1 5 4 5h29q5 0 4-5l-7-18Z" fill="#d0d0d0" stroke="#5a5a5a" />
    <path d="M40 48h15l6 12q-13 4-26 0Z" fill="#f0f0f0" />
    <path d="m42 50 5 3-3 5-4-3ZM50 51l4 2-1 4-4-1Z" fill="#9aa6b4" />
    <path d="M33 35q0-3 14-3t14 3v11q-1 3-14 3t-14-3Z" fill="#1a1a1a" />
    <ellipse cx="47" cy="35" rx="13" ry="2" fill="#444" />
  </svg>
);

function Slot({ children, dot, size = "size-16" }: { children: React.ReactNode; dot?: boolean; size?: string }) {
  return (
    <div className="relative flex h-full w-[83.200px] shrink-0 items-center justify-center pb-1.5">
      <div className={clsx("shrink-0 drop-shadow-[0_1px_1px_rgba(0,0,0,0.25)]", size)}>{children}</div>
      {dot && <div className="absolute bottom-1 left-1/2 size-2 -translate-x-1/2 rounded-full bg-[#606060]" />}
    </div>
  );
}

function Divider({ className }: { className: string }) {
  return (
    <div className={clsx("flex h-full shrink-0 items-center justify-center", className)}>
      <div className="h-[74px] w-0.5 bg-[#a6a6a6]" />
    </div>
  );
}

function Thumb({ children, badge, className }: { children: React.ReactNode; badge: React.ReactNode; className: string }) {
  return (
    <div className="relative h-full w-[83.200px] shrink-0">
      <div className={clsx("absolute left-[5px] w-[74px] overflow-hidden bg-white shadow-[0_1px_3px_rgba(0,0,0,0.15)]", className)}>{children}</div>
      <div className="absolute top-[59px] left-[54px] size-[25px]">{badge}</div>
    </div>
  );
}

const FinderWindow = () => (
  <svg viewBox="0 0 74 39" className="size-full">
    <path d="M0 0h74v5H0Z" fill="#ededed" />
    <path d="M0 0h15v39H0Z" fill="#e0e2e3" />
    <path d="M4 9h7M4 13h8M4 17h6M4 21h8M4 25h7M4 29h8" stroke="#b4bcc4" strokeWidth="1" />
    <path d="M1.500 2.500h2" stroke="#e0554a" strokeWidth="1.500" />
    <path d="M21 10h6v3h-6Z" fill="#222" />
    <path d="M36 8h4v6h-4ZM51 10h3v3h-3ZM62 9h6v8h-6Z" fill="#d8dde0" stroke="#aab" strokeWidth=".5" />
    <path d="M20 17h9M34 17h8M48 17h8M61 20h9" stroke="#999" strokeWidth=".8" />
  </svg>
);

const FinderFiles = () => (
  <svg viewBox="0 0 74 36" className="size-full">
    <path d="M0 0h74v5H0Z" fill="#ededed" />
    <path d="M0 0h10v36H0Z" fill="#e0e2e3" />
    <path d="M2 9h6M2 13h6M2 17h6M2 21h6M2 25h6" stroke="#b4bcc4" strokeWidth="1" />
    <path d="M1.500 2.500h2" stroke="#e0554a" strokeWidth="1.500" />
    <path d="M21 7h3v5h-3ZM28 7h3v5h-3Z" fill="#5fc8d2" />
    <path d="M37 8h4v4h-4ZM46 8h4v4h-4ZM56 8h4v4h-4Z" fill="#f1cfb4" />
    <path d="M14 8h4v5h-4ZM38 19h4v6h-4Z" fill="#f4f4f4" stroke="#aab" strokeWidth=".5" />
    <path d="M14 15h5M20 15h5M27 15h6M36 15h6M45 15h7M55 15h7M36 27.500h8" stroke="#999" strokeWidth=".8" />
  </svg>
);

function Trash() {
  return (
    <svg viewBox="0 0 60 76" className="mt-[9px] ml-[14px] h-[76px] w-[60px]">
      <path d="m7 14 5-9 8 5 5-8 8 6 8-5 4 8 7 2 2 8-8 3H8Z" fill="#dedede" />
      <path d="m12 10 7-5 4 7-6 5ZM36 6l6 4-3 8-7-2ZM44 12l8 1-1 6-8 1Z" fill="#6b5f5a" />
      <path d="m21 9 5 2-3 4-4-1Z" fill="#5cc0b8" />
      <path d="m28 8 6 2-2 6-6 1Z" fill="#fafafa" />
      <path d="M1.500 16Q3 21 30 21t28.500-5L51 70q-1 5-21 5T9 70Z" fill="#dedede" stroke="#c2c2c2" />
      <path d="M1.500 16Q3 21 30 21t28.500-5" fill="none" stroke="#f8f8f8" strokeWidth="2" />
      <path d="M12 26q5 20 4 40M26 28q8 16 3 38M46 26q-6 20-3 38" fill="none" stroke="#cdcdcc" strokeWidth="2" />
    </svg>
  );
}

function Dock() {
  return (
    <div className="absolute top-[1688px] left-[66px] flex h-[102px] w-[2748px] rounded-[36px] bg-[linear-gradient(90deg,#e4e7ea_0%,#e9ebec_8%,#e7ebef_12%,#e2e2e2_18%,#e1e1e1_80%,#ebebeb_88%,#ececec_100%)] pl-[5.200px] shadow-[0_0_0_1px_rgba(0,0,0,0.140),0_6px_90px_rgba(0,0,0,0.26),inset_0_0_0_1px_rgba(255,255,255,0.350)]">
      <Slot dot><Finder /></Slot>
      <Slot><Launchpad /></Slot>
      <Slot><Code /></Slot>
      <Slot><Safari /></Slot>
      <Slot><Messages /></Slot>
      <Slot><Mail /></Slot>
      <Slot><Calendar /></Slot>
      <Slot><Maps /></Slot>
      <Slot><Photos /></Slot>
      <Slot><FaceTime /></Slot>
      <Slot><Contacts /></Slot>
      <Slot><Reminders /></Slot>
      <Slot><Notes /></Slot>
      <Slot><AppleTv /></Slot>
      <Slot dot><Music /></Slot>
      <Slot><Podcasts /></Slot>
      <Slot><Keynote /></Slot>
      <Slot><Numbers /></Slot>
      <Slot><AppStore /></Slot>
      <Slot><Settings /></Slot>
      <Slot dot><Chrome /></Slot>
      <Slot size="size-[78px]"><Torrent /></Slot>
      <Divider className="w-[37.600px]" />
      <Slot dot size="size-[72px]"><Telegram /></Slot>
      <Slot dot><Xd /></Slot>
      <Slot><Preview /></Slot>
      <Divider className="w-[36.400px]" />
      <div className="h-full w-[83.200px] shrink-0 pt-4 pl-[9px]">
        <svg viewBox="0 0 67 68" className="h-[68px] w-[67px] drop-shadow-[0_1px_1px_rgba(0,0,0,0.25)]" fill="none" stroke="#eba9a3" strokeWidth=".7">
          <path d="M7 0h53v3h7v65H0V3h7Z" fill="#fff" stroke="none" />
          <path d="M5 7v56h58V7Z" stroke="#e3c4c2" />
          <path d="M5 10h58v4H5Z" fill="#d9a09c" />
          <path d="M5 18h58v12H5ZM5 18l58 12M63 18 5 30" />
          <path d="M8 38h10M8 41h10" stroke="#df6a60" strokeWidth="1.500" />
          <path d="M22 35h10v16H22ZM36 35h11v16H36l11-16M36 35l11 16M50 35h11v16H50l11-16M50 35l11 16" />
          <path d="M5 53.500h58v2.500H5Z" fill="#f4ab94" stroke="none" />
        </svg>
      </div>
      <Thumb className="top-[26px] h-[44px] bg-[#f4f4f4]" badge={<Xd id="xd-small" />}>
        <svg viewBox="0 0 74 44" className="size-full">
          <path d="M0 0h74v44H0Z" fill="#f2f2f2" />
          <path d="M14 3h46v41H14Z" fill="#dedede" />
          <path d="M32 17h13v25H32Z" fill="#6fe0ea" />
          <path d="M49 19h11v20H49Z" fill="#f4f4f4" />
          <path d="M3 8h8M3 11h6" stroke="#a9cbe8" strokeWidth="1.500" />
          <path d="M51 22h7M51 26h7M51 30h7" stroke="#bbb" />
        </svg>
      </Thumb>
      <Thumb className="top-[29px] h-[39px]" badge={<Finder id="finder-small" />}><FinderWindow /></Thumb>
      <Thumb className="top-[31px] h-[35px]" badge={<Chrome id="chrome-small" />}>
        <svg viewBox="0 0 74 35" className="size-full">
          <path d="M0 0h74v3H0Z" fill="#e8e2e2" />
          <path d="M13 6.500h48v4H13Z" fill="#3f88b0" />
          <path d="M14 12.500h46M18 15h38M14 25h46M14 28h46M14 31h46" stroke="#a9a9a9" strokeWidth=".8" />
          <path d="M28 17h18v4H28Z" fill="#8fb4dd" />
        </svg>
      </Thumb>
      <Thumb className="top-[27px] h-[42px]" badge={<Music id="music-small" />}>
        <svg viewBox="0 0 74 42" className="size-full">
          <path d="M0 0h14v42H0Z" fill="#dcdcdc" />
          <path d="M2 10h7M2 14h6M2 18h7M2 22h6" stroke="#e79a9a" />
          <path d="M17 6h10M17 10h8M17 14h9M17 18h8M17 22h10M17 26h8M17 30h9M40 6h10M40 10h8M40 14h12M40 18h10M52 8h12M52 12h9M40 22h9M40 26h12M52 18h8" stroke="#8b8b8b" strokeWidth=".9" />
          <path d="M31 5v37" stroke="#e8b0b0" strokeWidth=".6" />
        </svg>
      </Thumb>
      <Thumb className="top-[30px] h-[36px]" badge={<Finder id="finder-small-2" />}><FinderFiles /></Thumb>
      <Trash />
    </div>
  );
}

export default function App() {
  return (
    <div className="relative flex h-[1800px] w-[2880px] flex-col overflow-hidden bg-[#e4e4e4] font-['Inter',sans-serif]">
      <TopBar />
      <div className="flex min-h-0 flex-1">
        <ToolRail />
        <LayersPanel />
        <Canvas />
        <Inspector />
      </div>
      <Dock />
    </div>
  );
}
